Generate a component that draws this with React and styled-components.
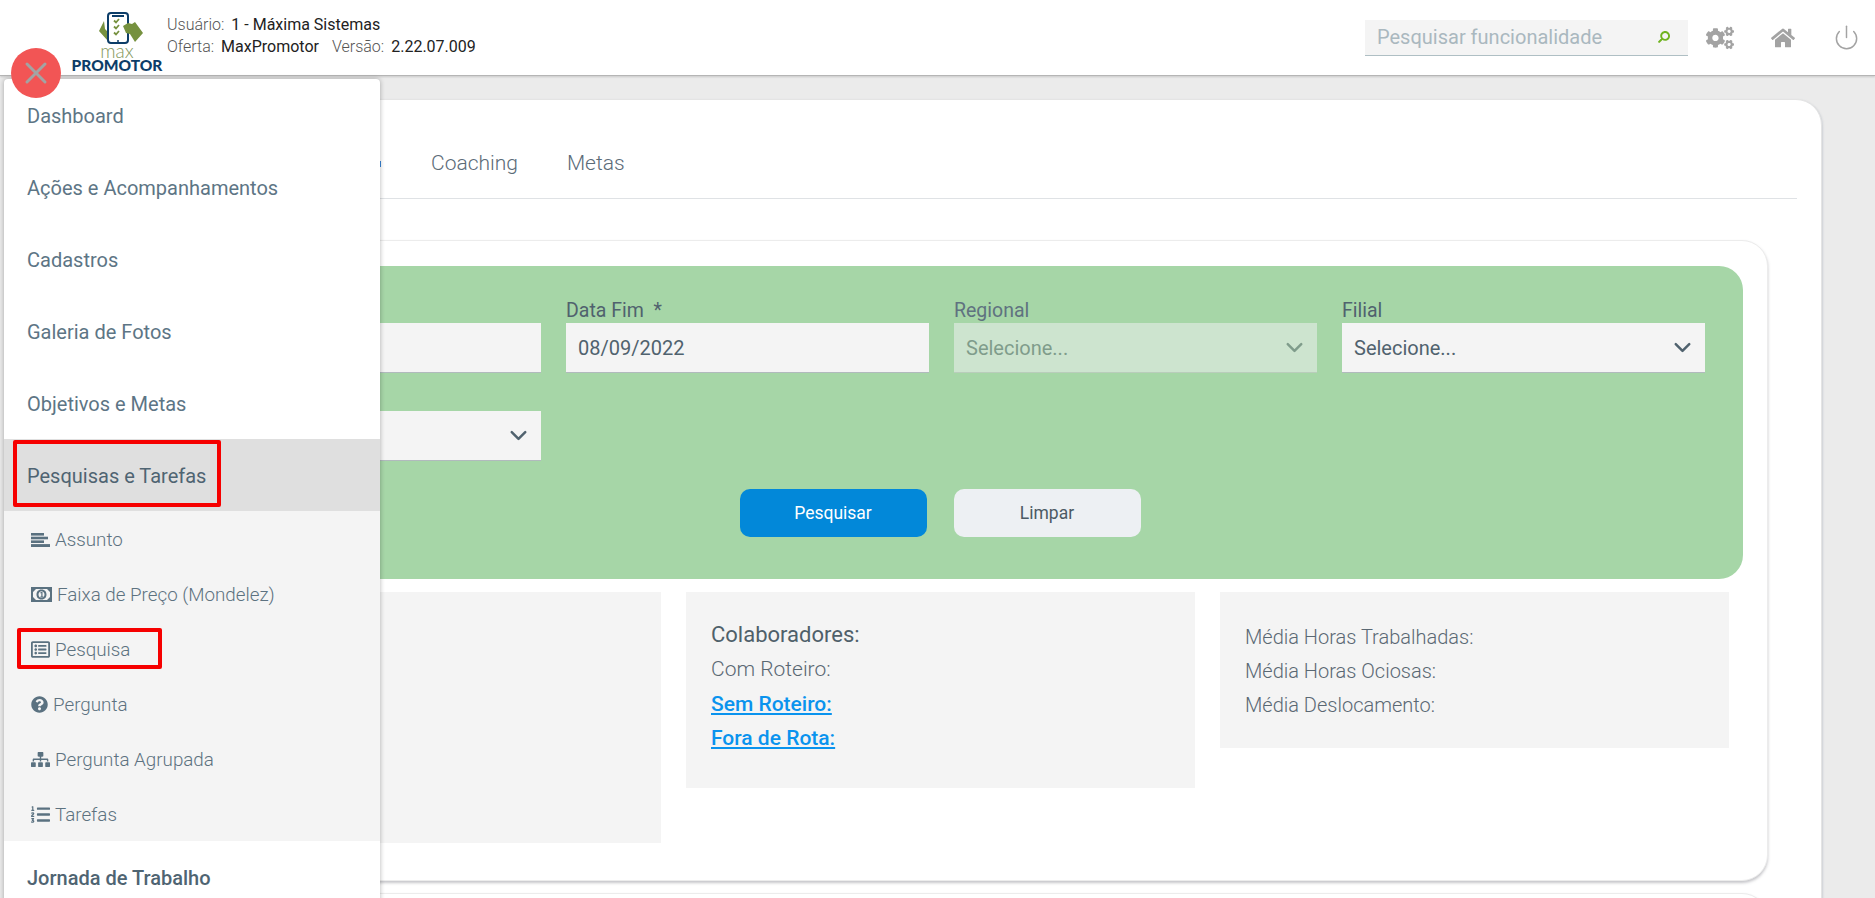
import React from "react";
import styled, { createGlobalStyle } from "styled-components";
import { ChevronDown, Power, X } from "lucide-react";
import {
  FaCogs,
  FaHome,
  FaRegListAlt,
  FaListOl,
  FaQuestionCircle,
  FaSearch,
  FaSitemap,
} from "react-icons/fa";

const GlobalStyle = createGlobalStyle`
  html, body {
    margin: 0;
    padding: 0;
    height: 100%;
    overflow: hidden;
  }
  * { box-sizing: border-box; }
  body {
    font-family: Roboto, "Liberation Sans", sans-serif;
    background: #ebebeb;
  }
`;

const Page = styled.div`
  position: relative;
  width: 1875px;
  height: 898px;
  overflow: hidden;
  background: #ebebeb;
`;

const Header = styled.header`
  display: flex;
  align-items: center;
  height: 76px;
  padding: 0 15px 0 72px;
  background: #fff;
  border-bottom: 1px solid #b5b5b5;
  box-shadow: 0 1px 2px rgba(0, 0, 0, 0.15);
`;

const Logo = styled.div`
  display: flex;
  flex-direction: column;
  align-items: center;
  width: 90px;
  height: 75px;
  padding-top: 12px;
  svg {
    margin-left: 8px;
  }
`;

const LogoMax = styled.span`
  font-family: Lato, sans-serif;
  font-size: 19px;
  font-weight: 300;
  line-height: 13px;
  color: #84985a;
`;

const LogoName = styled.span`
  margin-top: 1px;
  font-family: Lato, sans-serif;
  font-size: 15.5px;
  font-weight: 900;
  line-height: 14px;
  color: #0c3d68;
`;

const UserInfo = styled.div`
  display: flex;
  flex-direction: column;
  gap: 3px;
  margin: -4px 0 0 5px;
  font-size: 16px;
  line-height: 19px;
`;

const InfoLine = styled.div`
  display: flex;
  gap: 7px;
`;

const InfoLabel = styled.span`
  font-weight: 300;
  color: #555;
  margin-left: ${(p) => (p.$spaced ? "6px" : "0")};
`;

const InfoValue = styled.span`
  color: #222;
`;

const HeaderRight = styled.div`
  display: flex;
  align-items: center;
  margin-left: auto;
`;

const SearchBox = styled.div`
  display: flex;
  align-items: center;
  justify-content: space-between;
  width: 323px;
  height: 36px;
  margin-right: 18px;
  padding: 0 18px 0 12px;
  background: #f4f4f4;
  border-bottom: 1px solid #afbfc4;
  font-size: 20px;
  color: #aab8bf;
  svg {
    color: #6fb320;
    transform: scaleX(-1);
  }
`;

const HeaderIcons = styled.div`
  display: flex;
  align-items: center;
  gap: 35px;
`;

const HeaderIcon = styled.span`
  display: flex;
  align-items: center;
  justify-content: center;
  width: 28px;
  height: 28px;
  color: #a3a3a3;
`;

const Content = styled.main`
  padding: 23px 53px 0 60px;
`;

const OuterCard = styled.div`
  height: 900px;
  padding: 0 24px 0 25px;
  background: #fff;
  border-radius: 26px;
  border: 1px solid #e4e4e4;
  box-shadow: 1px 1px 2px rgba(120, 130, 150, 0.25);
`;

const Tabs = styled.nav`
  display: flex;
  align-items: center;
  gap: 49px;
  height: 99px;
  padding: 27px 0 0 345px;
  border-bottom: 1px solid #dfe2e5;
`;

const TabMark = styled.span`
  position: absolute;
  left: 380px;
  top: 161px;
  width: 1px;
  height: 6px;
  background: #3a86d8;
`;

const Tab = styled.span`
  font-size: 21px;
  font-weight: 300;
  color: #5b6b78;
`;

const InnerCard = styled.section`
  margin: 41px 29px 12px 29px;
  padding: 25px 24px 37px 24px;
  background: #fff;
  border: 1px solid #ececec;
  border-radius: 26px;
  box-shadow: 0 2px 3px rgba(90, 90, 100, 0.35);
`;

const NextCard = styled(InnerCard)`
  margin-top: 0;
  height: 80px;
`;

const FilterPanel = styled.div`
  padding: 33px 38px 42px;
  background: #a6d6a7;
  border-radius: 24px;
`;

const FieldGrid = styled.div`
  display: grid;
  grid-template-columns: repeat(4, 363px);
  column-gap: 25px;
  row-gap: 14px;
`;

const Field = styled.div`
  display: flex;
  flex-direction: column;
`;

const FieldLabel = styled.label`
  height: 24px;
  padding-top: 1px;
  font-size: 19.5px;
  line-height: 22px;
  color: ${(p) => (p.$muted ? "#5f7280" : "#50626e")};
`;

const Input = styled.div`
  display: flex;
  align-items: center;
  justify-content: space-between;
  height: 50px;
  padding: 0 9px 0 12px;
  font-size: 20px;
  background: ${(p) => (p.$disabled ? "#cde4cf" : "#f4f4f4")};
  color: ${(p) => (p.$disabled ? "#7f9c8b" : "#50626e")};
  border-bottom: 1px solid ${(p) => (p.$disabled ? "#b9cdbb" : "#b1babd")};
`;

const FormActions = styled.div`
  display: flex;
  justify-content: center;
  gap: 27px;
  margin-top: 28px;
  padding-right: 3px;
`;

const Button = styled.button`
  width: 187px;
  height: 48px;
  border: 0;
  border-radius: 10px;
  font-family: inherit;
  font-size: 17.5px;
  background: ${(p) => (p.$primary ? "#0288d9" : "#edf0f3")};
  color: ${(p) => (p.$primary ? "#fff" : "#4c5a64")};
`;

const Panels = styled.div`
  display: grid;
  grid-template-columns: repeat(3, 509px);
  gap: 25px;
  align-items: start;
  margin: 13px 0 0 12px;
`;

const Panel = styled.div`
  height: ${(p) => p.$height}px;
  padding: ${(p) => p.$top}px 25px 0;
  background: #f4f4f4;
`;

const PanelTitle = styled.div`
  font-size: 22px;
  line-height: 34px;
  color: #4f606a;
`;

const PanelLine = styled.div`
  font-size: ${(p) => p.$size || 21}px;
  font-weight: 300;
  line-height: ${(p) => p.$line || 34}px;
  color: #5a6873;
`;

const PanelLink = styled.a`
  display: block;
  font-size: 21px;
  font-weight: 500;
  line-height: 34.5px;
  color: #0a93ee;
  text-decoration: underline;
`;

const Sidebar = styled.aside`
  position: absolute;
  top: 79px;
  left: 4px;
  width: 376px;
  background: #fff;
  border-radius: 4px 4px 0 0;
  box-shadow: 0 0 5px rgba(0, 0, 0, 0.3);
`;

const MenuItem = styled.div`
  display: flex;
  align-items: center;
  height: 72px;
  padding: 2px 0 0 23px;
  font-size: 20px;
  font-weight: ${(p) => p.$weight || 400};
  color: ${(p) => (p.$weight ? "#4f6472" : "#5d7585")};
  background: ${(p) => (p.$active ? "#dfdfdf" : "transparent")};
`;

const SubMenu = styled.div`
  background: #f4f4f4;
`;

const SubItem = styled.div`
  display: flex;
  align-items: center;
  gap: 5px;
  height: 55px;
  padding: 2px 0 0 27px;
  font-size: 18.8px;
  font-weight: 300;
  color: #5d7280;
  svg {
    color: #5a7180;
  }
`;

const CloseButton = styled.div`
  position: absolute;
  top: 48px;
  left: 11px;
  display: flex;
  align-items: center;
  justify-content: center;
  width: 50px;
  height: 50px;
  border-radius: 50%;
  background: #f25555;
  color: #a3a3a3;
`;

const Highlight = styled.div`
  position: absolute;
  top: ${(p) => p.$top}px;
  left: ${(p) => p.$left}px;
  width: ${(p) => p.$width}px;
  height: ${(p) => p.$height}px;
  border: 4px solid #f60000;
  border-radius: 2px;
`;

function LogoMark() {
  return (
    <svg width="50" height="32" viewBox="0 0 50 32">
      <path d="M8 9 L3 19 L12 29 L14 22 L9 17 Z" fill="#76913f" />
      <rect x="12" y="1" width="20" height="30" rx="3" fill="#fff" stroke="#0c3d68" strokeWidth="2" />
      <path d="M16 3 h12 v2 h-12 z" fill="#0c3d68" />
      <circle cx="22" cy="29" r="1" fill="#0c3d68" />
      <path d="M18 8.5 l2 2 l3-3.5 M18 14.5 l2 2 l3-3.5 M18 20.5 l2 2 l3-3.5" fill="none" stroke="#76913f" strokeWidth="1.8" />
      <path d="M27 14 L32 11 L36 12 L39 10 L47 21 L39 30 L34 22 L30 21 Z" fill="#76913f" />
    </svg>
  );
}

function AlignIcon() {
  return (
    <svg width="19" height="14" viewBox="0 0 19 14" fill="#5a7180">
      <rect width="13" height="2.6" />
      <rect y="3.7" width="17" height="2.6" />
      <rect y="7.4" width="13" height="2.6" />
      <rect y="11.1" width="19" height="2.9" />
    </svg>
  );
}

function MoneyIcon() {
  return (
    <svg width="21" height="15" viewBox="0 0 21 15" fill="#5a7180">
      <path fillRule="evenodd" d="M0 0 H21 V15 H0 Z M2 2 V13 H19 V2 Z" />
      <path d="M2 2 H5 L2 5 Z M19 2 H16 L19 5 Z M2 13 H5 L2 10 Z M19 13 H16 L19 10 Z" />
      <path fillRule="evenodd" d="M10.5 2.5 C14 2.5 15.5 5 15.5 7.5 C15.5 10 14 12.5 10.5 12.5 C7 12.5 5.5 10 5.5 7.5 C5.5 5 7 2.5 10.5 2.5 Z M7.5 7.5 C7.5 9.5 8.8 10.8 10.5 10.8 C12.2 10.8 13.5 9.5 13.5 7.5 C13.5 5.5 12.2 4.2 10.5 4.2 C8.8 4.2 7.5 5.5 7.5 7.5 Z" />
      <path d="M9.2 5.6 L10.9 4.8 H11.5 V9.6 H12.5 V10.4 H9.3 V9.6 H10.3 V6 L9.5 6.4 Z" />
    </svg>
  );
}

function App() {
  return (
    <Page>
      <GlobalStyle />
      <Header>
        <Logo>
          <LogoMark />
          <LogoMax>max</LogoMax>
          <LogoName>PROMOTOR</LogoName>
        </Logo>
        <UserInfo>
          <InfoLine>
            <InfoLabel>Usuário:</InfoLabel>
            <InfoValue>1 - Máxima Sistemas</InfoValue>
          </InfoLine>
          <InfoLine>
            <InfoLabel>Oferta:</InfoLabel>
            <InfoValue>MaxPromotor</InfoValue>
            <InfoLabel $spaced>Versão:</InfoLabel>
            <InfoValue>2.22.07.009</InfoValue>
          </InfoLine>
        </UserInfo>
        <HeaderRight>
          <SearchBox>
            Pesquisar funcionalidade
            <FaSearch size={12} />
          </SearchBox>
          <HeaderIcons>
            <HeaderIcon><FaCogs size={28} /></HeaderIcon>
            <HeaderIcon><FaHome size={24} /></HeaderIcon>
            <HeaderIcon><Power size={27} strokeWidth={1.3} /></HeaderIcon>
          </HeaderIcons>
        </HeaderRight>
      </Header>

      <Content>
        <OuterCard>
          <Tabs>
            <TabMark />
            <Tab>Coaching</Tab>
            <Tab>Metas</Tab>
          </Tabs>
          <InnerCard>
            <FilterPanel>
              <FieldGrid>
                <Field>
                  <FieldLabel>&nbsp;</FieldLabel>
                  <Input />
                </Field>
                <Field>
                  <FieldLabel>Data Fim&nbsp; *</FieldLabel>
                  <Input>08/09/2022</Input>
                </Field>
                <Field>
                  <FieldLabel $muted>Regional</FieldLabel>
                  <Input $disabled>
                    Selecione...
                    <ChevronDown size={27} strokeWidth={2.2} />
                  </Input>
                </Field>
                <Field>
                  <FieldLabel>Filial</FieldLabel>
                  <Input>
                    Selecione...
                    <ChevronDown size={27} strokeWidth={2.2} />
                  </Input>
                </Field>
                <Field>
                  <FieldLabel>&nbsp;</FieldLabel>
                  <Input>
                    <span />
                    <ChevronDown size={27} strokeWidth={2.2} />
                  </Input>
                </Field>
              </FieldGrid>
              <FormActions>
                <Button $primary>Pesquisar</Button>
                <Button>Limpar</Button>
              </FormActions>
            </FilterPanel>
            <Panels>
              <Panel $height={251} $top={25} />
              <Panel $height={196} $top={26}>
                <PanelTitle>Colaboradores:</PanelTitle>
                <PanelLine $line={34.5}>Com Roteiro:</PanelLine>
                <PanelLink>Sem Roteiro:</PanelLink>
                <PanelLink>Fora de Rota:</PanelLink>
              </Panel>
              <Panel $height={156} $top={28}>
                <PanelLine $size={20}>Média Horas Trabalhadas:</PanelLine>
                <PanelLine $size={20}>Média Horas Ociosas:</PanelLine>
                <PanelLine $size={20}>Média Deslocamento:</PanelLine>
              </Panel>
            </Panels>
          </InnerCard>
          <NextCard />
        </OuterCard>
      </Content>

      <Sidebar>
        <MenuItem>Dashboard</MenuItem>
        <MenuItem>Ações e Acompanhamentos</MenuItem>
        <MenuItem>Cadastros</MenuItem>
        <MenuItem>Galeria de Fotos</MenuItem>
        <MenuItem>Objetivos e Metas</MenuItem>
        <MenuItem $active $weight={450}>Pesquisas e Tarefas</MenuItem>
        <SubMenu>
          <SubItem><AlignIcon />Assunto</SubItem>
          <SubItem><MoneyIcon />Faixa de Preço (Mondelez)</SubItem>
          <SubItem><FaRegListAlt size={19} />Pesquisa</SubItem>
          <SubItem><FaQuestionCircle size={17} />Pergunta</SubItem>
          <SubItem><FaSitemap size={19} />Pergunta Agrupada</SubItem>
          <SubItem><FaListOl size={19} />Tarefas</SubItem>
        </SubMenu>
        <MenuItem $weight={500}>Jornada de Trabalho</MenuItem>
      </Sidebar>

      <CloseButton><X size={36} strokeWidth={2} /></CloseButton>
      <Highlight $top={440} $left={13} $width={208} $height={67} />
      <Highlight $top={628} $left={17} $width={145} $height={41} />
    </Page>
  );
}

export default App;
